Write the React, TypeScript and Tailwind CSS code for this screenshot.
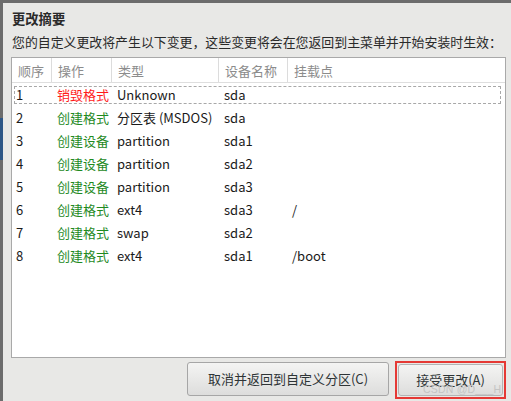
import React from 'react';

type Row = { n: string; op: string; destroy?: boolean; type: string; dev: string; mount: string };

const rows: Row[] = [
  { n: '1', op: '销毁格式', destroy: true, type: 'Unknown', dev: 'sda', mount: '' },
  { n: '2', op: '创建格式', type: '分区表 (MSDOS)', dev: 'sda', mount: '' },
  { n: '3', op: '创建设备', type: 'partition', dev: 'sda1', mount: '' },
  { n: '4', op: '创建设备', type: 'partition', dev: 'sda2', mount: '' },
  { n: '5', op: '创建设备', type: 'partition', dev: 'sda3', mount: '' },
  { n: '6', op: '创建格式', type: 'ext4', dev: 'sda3', mount: '/' },
  { n: '7', op: '创建格式', type: 'swap', dev: 'sda2', mount: '' },
  { n: '8', op: '创建格式', type: 'ext4', dev: 'sda1', mount: '/boot' },
];

const headers = ['顺序', '操作', '类型', '设备名称', '挂载点'];

export default function App() {
  return (
    <div
      className="w-[511px] h-[401px] bg-[#6c6c6c] flex flex-col overflow-hidden text-[13px] text-[#2e3436]"
      style={{ fontFamily: '"Noto Sans CJK SC", "DejaVu Sans", sans-serif' }}
    >
      {/* strip of the window behind */}
      <div className="h-[3px] shrink-0" />
      <div className="flex flex-1 min-h-0">
        <div className="w-[3px] shrink-0 flex flex-col">
          <div className="h-[115px]" />
          <div className="h-[42px] bg-[#2d5686]" />
        </div>

        <div className="flex-1 min-w-0 bg-[#e8e8e6] pl-[8px] pr-[5px] pt-[8px] flex flex-col">
          <div className="pl-[1px] font-bold leading-[16px] text-[13.3px] text-[#2a2a2a]">更改摘要</div>
          <div className="pl-[1px] mt-[7px] leading-[16px] text-[12.9px] whitespace-nowrap text-[#2a2a2a]">
            您的自定义更改将产生以下变更，这些变更将会在您返回到主菜单并开始安装时生效：
          </div>

          <div className="mt-[7px] h-[301px] border border-[#a9a9a9] bg-white flex flex-col">
            <div className="grid grid-cols-[40px_60px_107px_69px_1fr] h-[25px] border-b border-[#dedede] text-[#8c8c8c]">
              {headers.map((h, i) => (
                <div
                  key={h}
                  className={`flex items-center pl-[6px] leading-none ${i < 4 ? 'border-r border-[#dcdcdc]' : ''}`}
                >
                  {h}
                </div>
              ))}
            </div>

            {rows.map((r, i) => (
              <div key={r.n} className="relative grid grid-cols-[40px_60px_107px_69px_1fr] h-[23px] items-center text-[#1a1a1a]">
                {i === 0 && (
                  <div className="absolute left-[2px] right-[4px] top-[3px] h-[18px] border border-dashed border-[#a8a8a8]" />
                )}
                <div className="pl-[4px]">{r.n}</div>
                <div className={`pl-[5px] ${r.destroy ? 'text-[#ff1a1a]' : 'text-[#1f8a1f]'}`}>{r.op}</div>
                <div className="pl-[5px] whitespace-nowrap">{r.type}</div>
                <div className="pl-[5px]">{r.dev}</div>
                <div className="pl-[4px]">{r.mount}</div>
              </div>
            ))}
          </div>

          <div className="flex justify-end items-start mt-[3px] gap-[6px]">
            <button className="mt-[1px] w-[202px] h-[34px] rounded-[3px] border border-[#a6a6a6] bg-gradient-to-b from-[#f4f4f3] to-[#dddddc] text-[13px] text-[#2e3436]">
              取消并返回到自定义分区(C)
            </button>
            <div className="relative w-[111px] h-[38px] border-2 border-[#e53935] p-[1px]">
              <button className="w-full h-full rounded-[3px] border border-[#b4b4b4] bg-gradient-to-b from-[#f4f4f3] to-[#dddddc] text-[13px] text-[#2e3436]">
                接受更改(A)
              </button>
              <span className="absolute left-[26px] top-[21px] text-[10.5px] leading-none text-[#c4c4c4] tracking-[0.2px] whitespace-nowrap" style={{ fontFamily: '"Liberation Sans", sans-serif' }}>
                CSDN @D___H
              </span>
            </div>
          </div>
        </div>
      </div>
    </div>
  );
}
